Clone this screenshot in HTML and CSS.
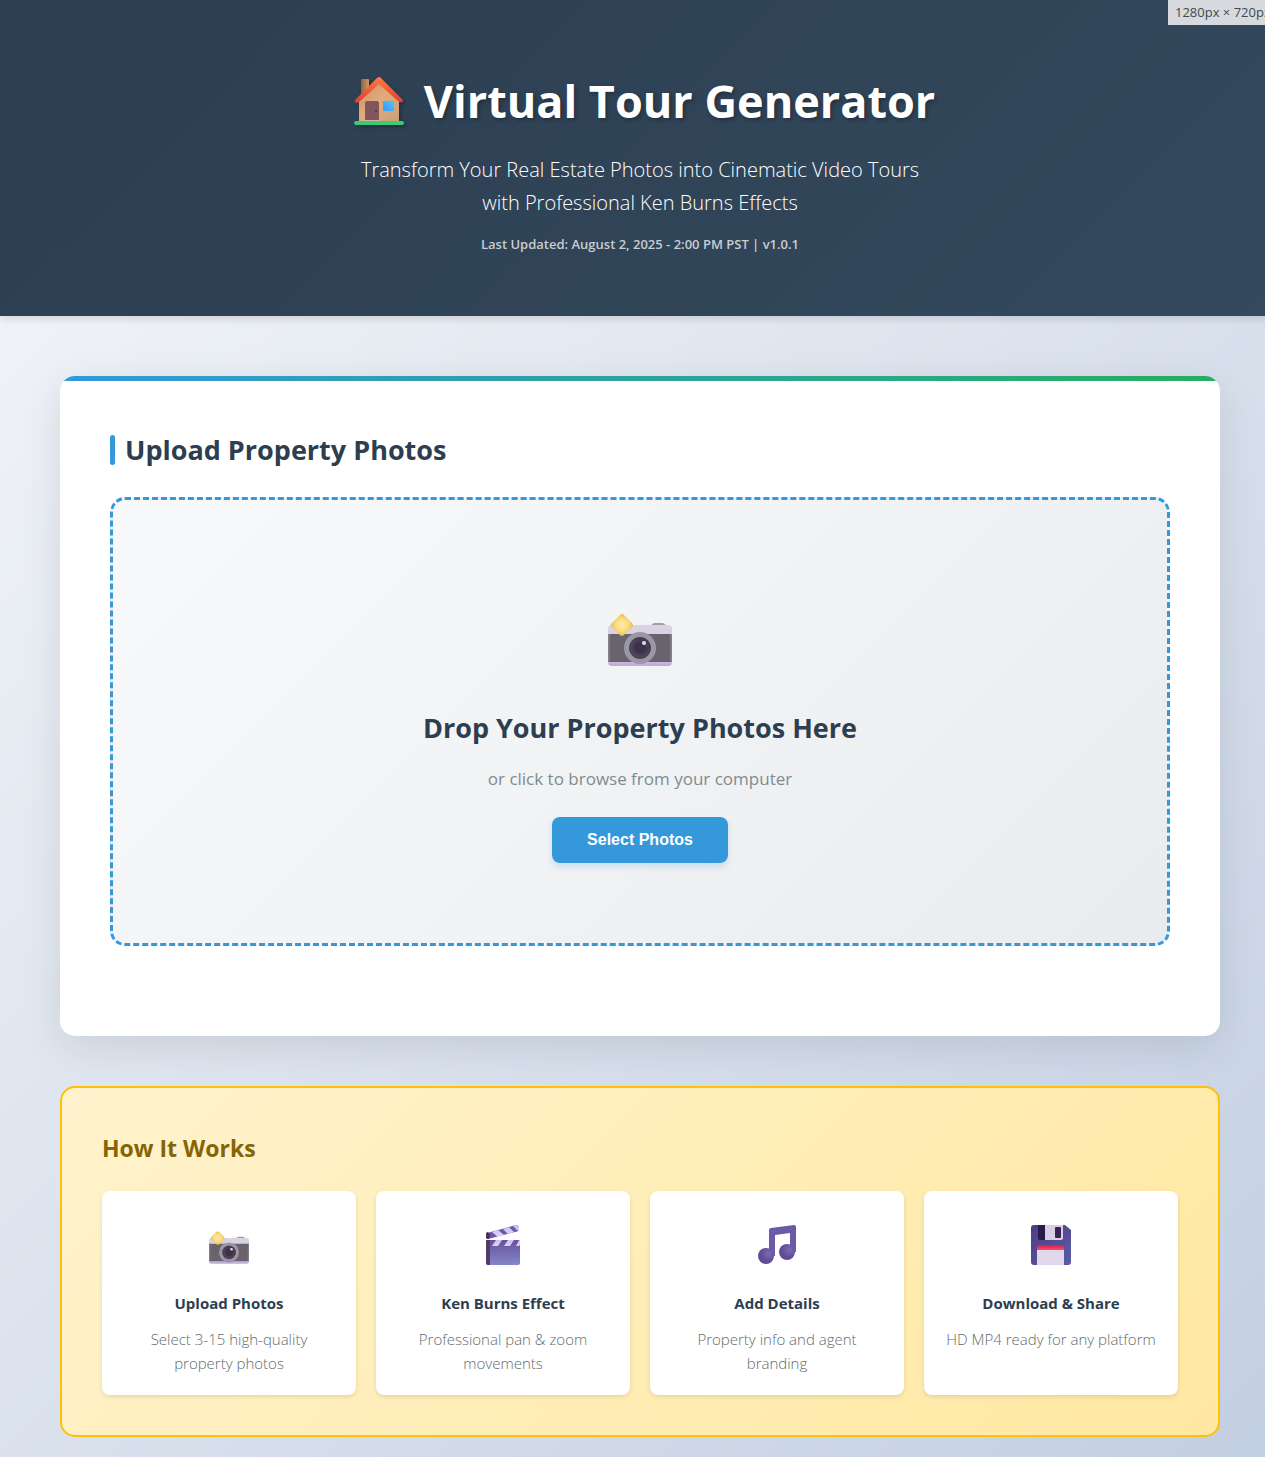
FILE: index.html
```html
<!DOCTYPE html>
<html lang="en">
<head>
<meta charset="utf-8">
<meta name="viewport" content="width=device-width, initial-scale=1">
<title>Virtual Tour Generator</title>
<link rel="stylesheet" href="styles.css">
</head>
<body>
<svg class="defs" width="0" height="0" aria-hidden="true">
  <defs>
    <linearGradient id="wall" x1="0" y1="0" x2="1" y2="1"><stop offset="0" stop-color="#c98f60"/><stop offset=".5" stop-color="#e2ab7b"/><stop offset="1" stop-color="#c9a07a"/></linearGradient>
    <linearGradient id="roof" x1="0" y1="0" x2="0" y2="1"><stop offset="0" stop-color="#ff7d3c"/><stop offset="1" stop-color="#dd3a3a"/></linearGradient>
    <linearGradient id="chimney"><stop offset="0" stop-color="#8f6340"/><stop offset="1" stop-color="#cf9964"/></linearGradient>
    <linearGradient id="pane" x1="0" y1="1" x2="1" y2="0"><stop offset="0" stop-color="#2f9df0"/><stop offset="1" stop-color="#4fc4ff"/></linearGradient>
    <linearGradient id="shell" x1="0" y1="0" x2="0" y2="1"><stop offset="0" stop-color="#d9d3e4"/><stop offset=".8" stop-color="#d6cce2"/><stop offset="1" stop-color="#c0a6da"/></linearGradient>
    <radialGradient id="spark"><stop offset="0" stop-color="#ffeab0"/><stop offset=".6" stop-color="#fadb7c"/><stop offset="1" stop-color="#e8bd45"/></radialGradient>
    <radialGradient id="lens" cx=".6" cy=".4"><stop offset="0" stop-color="#6c5f78"/><stop offset=".5" stop-color="#433950"/><stop offset="1" stop-color="#4e4259"/></radialGradient>
    <linearGradient id="slate" x1="0" y1="0" x2="0" y2="1"><stop offset="0" stop-color="#69519a"/><stop offset="1" stop-color="#8286cb"/></linearGradient>
    <linearGradient id="stripe" x1="0" y1="0" x2="0" y2="1"><stop offset="0" stop-color="#c9bff0"/><stop offset="1" stop-color="#ddd4fa"/></linearGradient>
    <radialGradient id="note" cx=".65" cy=".35"><stop offset="0" stop-color="#7b6bb8"/><stop offset="1" stop-color="#614b94"/></radialGradient>
    <linearGradient id="disk" x1="0" y1="0" x2="1" y2="1"><stop offset="0" stop-color="#4e3c82"/><stop offset="1" stop-color="#5d5da8"/></linearGradient>
    <linearGradient id="label" x1="0" y1="0" x2="0" y2="1"><stop offset="0" stop-color="#e5174b"/><stop offset="1" stop-color="#f0516e"/></linearGradient>
    <symbol id="camera" viewBox="0 0 64 54">
      <path d="M43 12q1-3 4-3h7q3 0 4 3z" fill="#a09da4"/>
      <rect x="0" y="11" width="64" height="41" rx="4" fill="url(#shell)"/>
      <path d="M0 20h64v28H0z" fill="#68636d"/>
      <path d="M0 20h2v28H0zM62 20h2v28h-2z" fill="#837d8a"/>
      <circle cx="32" cy="34" r="16" fill="#9c97a6"/>
      <circle cx="32" cy="34" r="11" fill="url(#lens)"/>
      <circle cx="32" cy="34" r="6" fill="#3b3149"/>
      <circle cx="36" cy="29" r="2" fill="#e5dfe9"/>
      <path d="M14 0q1 0 2 1l8 8q2 2 0 4l-8 8q-2 2-4 0l-8-8q-2-2 0-4l8-8q1-1 2-1z" fill="url(#spark)"/>
    </symbol>
  </defs>
</svg>

<header class="header">
  <h1 class="title">
    <svg class="house" viewBox="0 0 50 48" aria-hidden="true">
      <path d="M7 3q0-1 1-1h6q1 0 1 1v18H7z" fill="url(#chimney)"/>
      <path d="M5 22 25 4l20 18v22H5z" fill="url(#wall)"/>
      <path d="M23 1q2-2 4 0l21 21q2 2 0 3-2 1-4-1L25 7 5 25q-2 2-4 0-1-1 1-3z" fill="url(#roof)"/>
      <path d="M11 26q0-2 2-2h10q2 0 2 2v18H11z" fill="#80565a"/>
      <circle cx="22" cy="34" r="1" fill="#4d3037"/>
      <path d="M10 43h16v1H10z" fill="#c9b8ad"/>
      <rect x="29" y="24" width="11" height="10" rx="1" fill="url(#pane)"/>
      <path d="M2 44h46q2 0 2 2t-2 2H2q-2 0-2-2t2-2z" fill="#3bcb70"/>
    </svg>
    Virtual Tour Generator
  </h1>
  <p class="tagline">Transform Your Real Estate Photos into Cinematic Video Tours with Professional Ken Burns Effects</p>
  <p class="updated">Last Updated: August 2, 2025 - 2:00 PM PST | v1.0.1</p>
</header>
<div class="viewport-size">1280px × 720px</div>

<main class="content">
  <section class="card">
    <h2 class="section-title">Upload Property Photos</h2>
    <div class="dropzone">
      <svg class="drop-icon" viewBox="0 0 64 54" aria-hidden="true"><use href="#camera"/></svg>
      <h3 class="drop-title">Drop Your Property Photos Here</h3>
      <p class="drop-hint">or click to browse from your computer</p>
      <button class="button" type="button">Select Photos</button>
    </div>
  </section>

  <section class="how">
    <h2 class="how-title">How It Works</h2>
    <div class="steps">
      <article class="step">
        <div class="step-icon"><svg width="40" height="34" viewBox="0 0 64 54" aria-hidden="true"><use href="#camera"/></svg></div>
        <h3 class="step-title">Upload Photos</h3>
        <p class="step-text">Select 3-15 high-quality property photos</p>
      </article>
      <article class="step">
        <div class="step-icon"><svg width="36" height="40" viewBox="0 0 36 40" aria-hidden="true">
          <path d="M2 8 31 0q2 0 3 2v4L3 14q-2 0-2-2z" fill="#7057a5"/>
          <path d="m7 7 6-2 6 5-6 2zM18 4l6-2 5 5-6 2zM28 1l3-1q2 0 3 2v4l-1 0z" fill="url(#stripe)"/>
          <path d="M1 9q0-2 2-2l2 3-1 4q-3 0-3-2z" fill="#443052"/>
          <path d="M1 15h34v23q0 2-2 2H3q-2 0-2-2z" fill="url(#slate)"/>
          <path d="M1 15h4v25H3q-2 0-2-2z" fill="#533b66"/>
          <path d="M11 15h6l-4 6H7zM23 15h6l-4 6h-6zM34 15h1v5l-1 1h-3z" fill="url(#stripe)"/>
        </svg></div>
        <h3 class="step-title">Ken Burns Effect</h3>
        <p class="step-text">Professional pan &amp; zoom movements</p>
      </article>
      <article class="step">
        <div class="step-icon"><svg width="38" height="40" viewBox="0 0 38 40" aria-hidden="true">
          <path d="M11 5q0-2 2-2l23-3q2 0 2 2v24h-6V8L17 10v21h-6z" fill="#6c5aa8"/>
          <circle cx="8" cy="31" r="8" fill="url(#note)"/>
          <circle cx="29" cy="27" r="8" fill="url(#note)"/>
          <path d="M12 8h5v23h-3zM32 4h6v23h-3z" fill="#6c5aa8"/>
        </svg></div>
        <h3 class="step-title">Add Details</h3>
        <p class="step-text">Property info and agent branding</p>
      </article>
      <article class="step">
        <div class="step-icon"><svg width="40" height="40" viewBox="0 0 40 40" aria-hidden="true">
          <path d="M3 0h31l6 5v32q0 3-3 3H3q-3 0-3-3V3q0-3 3-3z" fill="url(#disk)"/>
          <path d="M7 0h7v15H9q-2 0-2-2z" fill="#2b1b4b"/>
          <path d="M14 0h18v13q0 2-2 2H14z" fill="#d6d0e2"/>
          <rect x="24" y="2" width="6" height="11" rx="1" fill="#3a2259"/>
          <path d="M6 22q0-2 2-2h23q2 0 2 2v3H6z" fill="url(#label)"/>
          <path d="M6 25h27v15H6z" fill="#e0d8ea"/>
        </svg></div>
        <h3 class="step-title">Download &amp; Share</h3>
        <p class="step-text">HD MP4 ready for any platform</p>
      </article>
    </div>
  </section>
</main>
</body>
</html>
```
FILE: styles.css
```css
* {
  box-sizing: border-box;
  margin: 0;
  padding: 0;
}

html {
  overflow-x: clip;
}

/* The page runs under the 15px scrollbar gutter. */
body {
  position: relative;
  margin-right: -15px;
  background: linear-gradient(135deg, #f5f7fa 0%, #c3cfe2 100%);
  color: #2c3e50;
  font-family: "Open Sans", "Noto Sans", sans-serif;
  overflow-x: clip;
}

.defs {
  position: absolute;
}

.header {
  padding: 62px 20px 60px;
  background: linear-gradient(135deg, #2c3e50 0%, #34495e 100%);
  box-shadow: 0 4px 6px rgba(0, 0, 0, 0.1);
  color: #fff;
  text-align: center;
}

.title {
  display: flex;
  align-items: center;
  justify-content: center;
  gap: 20px;
  margin-bottom: 14px;
  padding-left: 9px;
  font-size: 45px;
  font-weight: 700;
  line-height: 77px;
  text-shadow: 2px 2px 4px rgba(0, 0, 0, 0.3);
}

.house {
  width: 50px;
  height: 48px;
  filter: drop-shadow(2px 2px 2px rgba(0, 0, 0, 0.3));
}

.tagline {
  max-width: 600px;
  margin: 0 auto 14px;
  color: #fff;
  font-size: 20px;
  font-weight: 300;
  line-height: 33px;
}

.updated {
  color: #c8cdd2;
  font-size: 13px;
  font-weight: 600;
  line-height: 23px;
}

.viewport-size {
  position: absolute;
  top: 0;
  right: 0;
  width: 112px;
  padding-left: 7px;
  background: #d6d9dd;
  color: #45494d;
  font-size: 13px;
  line-height: 25px;
  white-space: nowrap;
}

.content {
  max-width: 1200px;
  margin: 0 auto;
  padding: 60px 20px 20px;
}

.card {
  position: relative;
  margin-bottom: 50px;
  padding: 50px 50px 90px;
  border-radius: 15px;
  background: #fff;
  box-shadow: 0 10px 40px rgba(0, 0, 0, 0.1);
}

.card::before {
  content: "";
  position: absolute;
  inset: 0;
  border-radius: 15px;
  background: linear-gradient(90deg, #3498db, #27ae60) top / 100% 5px no-repeat;
}

.section-title {
  display: flex;
  align-items: center;
  gap: 10px;
  margin-bottom: 23px;
  font-size: 27px;
  font-weight: 700;
  line-height: 48px;
}

.section-title::before {
  content: "";
  width: 5px;
  height: 30px;
  border-radius: 3px;
  background: #3498db;
}

.dropzone {
  position: relative;
  display: flex;
  flex-direction: column;
  align-items: center;
  padding: 80px 40px;
  border: 3px dashed #3498db;
  border-radius: 15px;
  background: linear-gradient(135deg, #f8f9fa 0%, #e9ecef 100%);
  text-align: center;
}

.drop-icon {
  width: 64px;
  height: 54px;
  margin: 34px 0 36px;
}

.drop-title {
  margin-bottom: 12px;
  font-size: 27px;
  font-weight: 700;
  line-height: 48px;
}

.drop-hint {
  margin-bottom: 24px;
  color: #7f8c8d;
  font-size: 17px;
  line-height: 29px;
}

.button {
  padding: 14px 35px;
  border: 0;
  border-radius: 8px;
  background: #3498db;
  box-shadow: 0 4px 6px rgba(52, 152, 219, 0.2);
  color: #fff;
  font: bold 16px/18px "Liberation Sans", Arial, sans-serif;
  cursor: pointer;
}

.how {
  padding: 40px;
  border: 2px solid #ffc107;
  border-radius: 15px;
  background: linear-gradient(135deg, #fff3cd 0%, #ffe8a1 100%);
}

.how-title {
  margin-bottom: 22px;
  color: #856404;
  font-size: 23px;
  font-weight: 700;
  line-height: 41px;
}

.steps {
  display: grid;
  grid-template-columns: repeat(auto-fit, minmax(200px, 1fr));
  gap: 20px;
}

.step {
  padding: 20px;
  border-radius: 8px;
  background: #fff;
  box-shadow: 0 2px 4px rgba(0, 0, 0, 0.1);
  text-align: center;
}

.step-icon {
  display: flex;
  align-items: flex-end;
  justify-content: center;
  height: 64px;
  margin-bottom: 16px;
  padding-bottom: 10px;
}

.step-title {
  margin-bottom: 12px;
  font-size: 15px;
  font-weight: 700;
  line-height: 24px;
}

.step-text {
  color: #5f6c6d;
  font-size: 15px;
  font-weight: 300;
  line-height: 24px;
}
```
